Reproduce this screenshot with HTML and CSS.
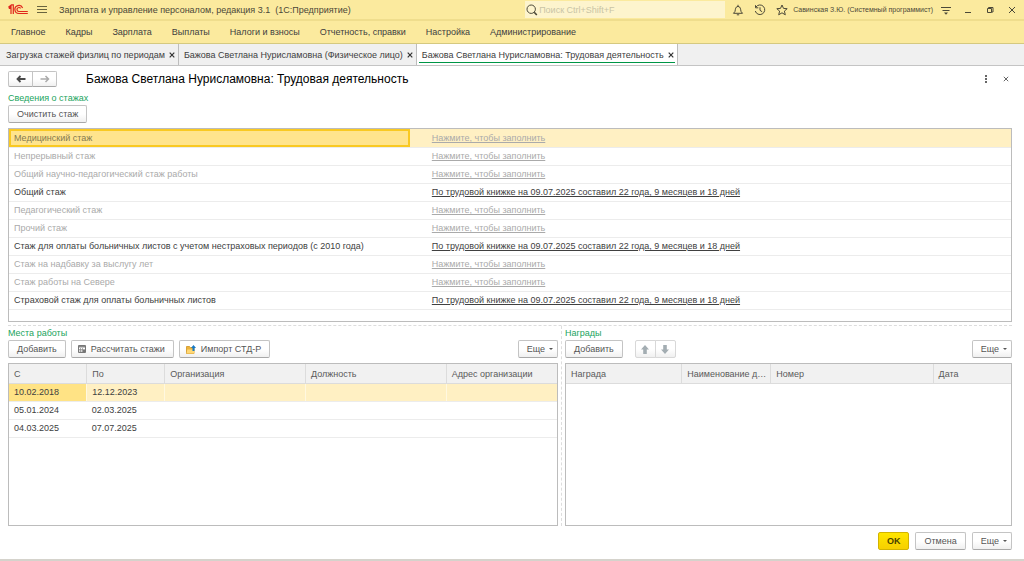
FILE: index.html
```html
<!DOCTYPE html>
<html lang="ru">
<head>
<meta charset="utf-8">
<title>Бажова Светлана Нурисламовна: Трудовая деятельность</title>
<link rel="stylesheet" href="styles.css">
</head>
<body>
<div class="app">
  <header class="titlebar">
    <svg class="logo" viewBox="0 0 20 11" width="20" height="11" role="img" aria-label="1С">
      <g fill="none" stroke="#e0261c" stroke-width="1.200">
        <path d="M.5 3.500 3 1.700V10M5.300 10V.9H3.500L.4 3.200M.8 4.500 3 3"/>
        <path d="M14.600 4A4 4 0 1 0 10.900 9.500H19.800"/>
        <path d="M12.600 4.300A2 2 0 1 0 10.900 7.500H19.800"/>
      </g>
    </svg>
    <button class="icon-btn burger" aria-label="Меню">
      <svg viewBox="0 0 10 9" width="10" height="9" stroke="#69643f" stroke-width="1"><path d="M0 1.500H10M0 4.500H10M0 7.500H10"/></svg>
    </button>
    <span class="app-name">Зарплата и управление персоналом, редакция 3.1&nbsp; (1С:Предприятие)</span>
    <label class="search">
      <svg viewBox="0 0 12 12" width="12" height="12" fill="none" stroke="#4b4838"><circle cx="5.200" cy="5.200" r="4.200"/><path d="M8.200 8.200 10.800 11" stroke-width="1.600"/></svg>
      <input type="search" placeholder="Поиск Ctrl+Shift+F" aria-label="Поиск">
    </label>
    <div class="tools">
      <button class="icon-btn" aria-label="Уведомления"><svg viewBox="0 0 12 12" width="12" height="12" fill="none" stroke="#4b4838"><path d="M1.500 9.300H10.500L9 7.400C8.600 5.400 8.500 2.400 6 2.400S3.400 5.400 3 7.400ZM6 .8V2.400M4.800 10.800H7.200"/></svg></button>
      <button class="icon-btn" aria-label="История"><svg viewBox="0 0 12 12" width="12" height="12" fill="none" stroke="#4b4838"><path d="M2 3A4.800 4.800 0 1 1 1.300 7M1.500 1.200V3.800H4.300M6 3.300V6.300L8.200 7.800"/></svg></button>
      <button class="icon-btn" aria-label="Избранное"><svg viewBox="0 0 12 12" width="12" height="12" fill="none" stroke="#4b4838"><path d="M6 1 7.500 4.400 11.200 4.700 8.400 7.100 9.300 10.800 6 8.800 2.700 10.800 3.600 7.100.8 4.700 4.500 4.400Z"/></svg></button>
    </div>
    <span class="user">Савинская З.Ю. (Системный программист)</span>
    <div class="window-tools">
      <button class="icon-btn" aria-label="Настройка панели"><svg viewBox="0 0 12 12" width="12" height="12" fill="none" stroke="#4b4838"><path d="M1 3.500H11M2.500 6.500H9.500"/><path d="M4 8.500H8L6 10.800Z" fill="#4b4838" stroke="none"/></svg></button>
      <button class="icon-btn" aria-label="Свернуть"><svg viewBox="0 0 12 12" width="12" height="12" fill="none" stroke="#4b4838"><path d="M3 8.500H9"/></svg></button>
      <button class="icon-btn" aria-label="Развернуть"><svg viewBox="0 0 12 12" width="12" height="12" fill="none" stroke="#4b4838"><path d="M3.500 4.500H7.500V8.500H3.500ZM4.500 4.500V3.500H9V8H7.500"/></svg></button>
      <button class="icon-btn" aria-label="Закрыть"><svg viewBox="0 0 12 12" width="12" height="12" fill="none" stroke="#4b4838"><path d="M3 3 9 9M9 3 3 9"/></svg></button>
    </div>
  </header>

  <nav class="menu">
    <a href="#">Главное</a><a href="#">Кадры</a><a href="#">Зарплата</a><a href="#">Выплаты</a><a href="#">Налоги и взносы</a><a href="#">Отчетность, справки</a><a href="#">Настройка</a><a href="#">Администрирование</a>
  </nav>

  <div class="tabs">
    <div class="tab"><a href="#">Загрузка стажей физлиц по периодам</a><button class="tab-close" aria-label="Закрыть вкладку"><svg viewBox="0 0 6 6" width="6" height="6"><path d="M.7.7 5.300 5.300M5.300.7.7 5.300"/></svg></button></div>
    <div class="tab"><a href="#">Бажова Светлана Нурисламовна (Физическое лицо)</a><button class="tab-close" aria-label="Закрыть вкладку"><svg viewBox="0 0 6 6" width="6" height="6"><path d="M.7.7 5.300 5.300M5.300.7.7 5.300"/></svg></button></div>
    <div class="tab active"><a href="#">Бажова Светлана Нурисламовна: Трудовая деятельность</a><button class="tab-close" aria-label="Закрыть вкладку"><svg viewBox="0 0 6 6" width="6" height="6"><path d="M.7.7 5.300 5.300M5.300.7.7 5.300"/></svg></button></div>
  </div>

  <main class="form">
    <div class="form-head">
      <div class="btn-pair">
        <button class="btn" aria-label="Назад"><svg viewBox="0 0 10 8" width="10" height="8" fill="none" stroke="#4a4a4a" stroke-width="1.800"><path d="M9.500 4H2M4.500 1 1.500 4 4.500 7"/></svg></button>
        <button class="btn" aria-label="Вперед"><svg viewBox="0 0 10 8" width="10" height="8" fill="none" stroke="#aaa" stroke-width="1.500"><path d="M.5 4H8M5.500 1 8.500 4 5.500 7"/></svg></button>
      </div>
      <h1>Бажова Светлана Нурисламовна: Трудовая деятельность</h1>
      <div class="form-tools">
        <button class="icon-btn" aria-label="Еще действия"><svg viewBox="0 0 8 10" width="8" height="10" fill="#666"><path d="M3 1H5V3H3ZM3 4H5V6H3ZM3 7H5V9H3Z"/></svg></button>
        <button class="icon-btn" aria-label="Закрыть форму"><svg viewBox="0 0 8 8" width="8" height="8" stroke="#666"><path d="M1.800 1.800 6.200 6.200M6.200 1.800 1.800 6.200"/></svg></button>
      </div>
    </div>

    <section class="experience">
      <h2>Сведения о стажах</h2>
      <div class="bar"><button class="btn">Очистить стаж</button></div>
      <div class="grid-box">
        <table class="grid exp-grid">
          <colgroup><col class="c-kind"><col></colgroup>
          <tbody>
            <tr class="selected empty"><td class="current">Медицинский стаж</td><td><a href="#">Нажмите, чтобы заполнить</a></td></tr>
            <tr class="empty"><td>Непрерывный стаж</td><td><a href="#">Нажмите, чтобы заполнить</a></td></tr>
            <tr class="empty"><td>Общий научно-педагогический стаж работы</td><td><a href="#">Нажмите, чтобы заполнить</a></td></tr>
            <tr><td>Общий стаж</td><td><a href="#">По трудовой книжке на 09.07.2025 составил 22 года, 9 месяцев и 18 дней</a></td></tr>
            <tr class="empty"><td>Педагогический стаж</td><td><a href="#">Нажмите, чтобы заполнить</a></td></tr>
            <tr class="empty"><td>Прочий стаж</td><td><a href="#">Нажмите, чтобы заполнить</a></td></tr>
            <tr><td>Стаж для оплаты больничных листов с учетом нестраховых периодов (с 2010 года)</td><td><a href="#">По трудовой книжке на 09.07.2025 составил 22 года, 9 месяцев и 18 дней</a></td></tr>
            <tr class="empty"><td>Стаж на надбавку за выслугу лет</td><td><a href="#">Нажмите, чтобы заполнить</a></td></tr>
            <tr class="empty"><td>Стаж работы на Севере</td><td><a href="#">Нажмите, чтобы заполнить</a></td></tr>
            <tr><td>Страховой стаж для оплаты больничных листов</td><td><a href="#">По трудовой книжке на 09.07.2025 составил 22 года, 9 месяцев и 18 дней</a></td></tr>
          </tbody>
        </table>
      </div>
    </section>

    <div class="lower">
      <section class="jobs">
        <h2>Места работы</h2>
        <div class="bar">
          <button class="btn">Добавить</button>
          <button class="btn with-icon"><svg viewBox="0 0 8 8" width="8" height="8"><path d="M.5.5H7.500V7.500H.5Z" fill="#fff" stroke="#777"/><path d="M1 1H7V2.500H1Z" fill="#888"/><path d="M2.500 3V7M4.500 3V7M1 4.500H7M1 6H5" stroke="#888" stroke-width=".7"/><path d="M5 5H7V7H5Z" fill="#777"/></svg>Рассчитать стажи</button>
          <button class="btn with-icon"><svg viewBox="0 0 10 9" width="10" height="9"><path d="M.5 8.500V1.500H3.500L4.500 2.500H8V8.500Z" fill="#edb43c" stroke="#cf9320" stroke-width=".8"/><path d="M.5 8.500 1.300 4.500H9L8 8.500Z" fill="#ffd875"/><path d="M7.500 0 10 3H8.500V6H6.500V3H5Z" fill="#1879c4"/></svg>Импорт СТД-Р</button>
          <button class="btn drop more">Еще<span class="caret"></span></button>
        </div>
        <div class="grid-box">
          <table class="grid jobs-grid">
            <colgroup><col class="c-from"><col class="c-to"><col class="c-org"><col class="c-post"><col></colgroup>
            <thead><tr><th>С</th><th>По</th><th>Организация</th><th>Должность</th><th>Адрес организации</th></tr></thead>
            <tbody>
              <tr class="selected"><td class="picked">10.02.2018</td><td>12.12.2023</td><td></td><td></td><td></td></tr>
              <tr><td>05.01.2024</td><td>02.03.2025</td><td></td><td></td><td></td></tr>
              <tr><td>04.03.2025</td><td>07.07.2025</td><td></td><td></td><td></td></tr>
            </tbody>
          </table>
        </div>
      </section>

      <section class="awards">
        <h2>Награды</h2>
        <div class="bar">
          <button class="btn">Добавить</button>
          <div class="btn-pair order">
            <button class="btn" aria-label="Вверх"><svg viewBox="0 0 8 9" width="8" height="9" fill="#a3adb2"><path d="M4 0 8 4.500H5.800V9H2.200V4.500H0Z"/></svg></button>
            <button class="btn" aria-label="Вниз"><svg viewBox="0 0 8 9" width="8" height="9" fill="#a3adb2"><path d="M4 9 8 4.500H5.800V0H2.200V4.500H0Z"/></svg></button>
          </div>
          <button class="btn drop more">Еще<span class="caret"></span></button>
        </div>
        <div class="grid-box">
          <table class="grid awards-grid">
            <colgroup><col class="c-award"><col class="c-name"><col class="c-num"><col></colgroup>
            <thead><tr><th>Награда</th><th>Наименование д…</th><th>Номер</th><th>Дата</th></tr></thead>
          </table>
        </div>
      </section>
    </div>

    <footer class="form-foot">
      <button class="btn primary">OK</button>
      <button class="btn">Отмена</button>
      <button class="btn drop">Еще<span class="caret"></span></button>
    </footer>
  </main>
</div>
</body>
</html>
```

FILE: styles.css
```css
* { box-sizing: border-box; }

body {
  margin: 0;
  font: 9px/12px "Liberation Sans", Arial, sans-serif;
  color: #404040;
  background: #fff;
}

button, input { font: inherit; color: inherit; }
a { color: inherit; text-decoration: none; }
h1, h2 { margin: 0; font-weight: normal; }
svg { display: block; flex: none; }

.app {
  display: flex;
  flex-direction: column;
  min-height: 100vh;
  border-bottom: 2px solid #d5d3cc;
}

/* Title bar */
.titlebar {
  display: flex;
  align-items: center;
  height: 21px;
  padding: 0 6px 0 8px;
  background: #fbea9e;
  border-bottom: 2px solid #efdd8d;
  color: #4b4838;
}
.icon-btn {
  display: flex;
  align-items: center;
  justify-content: center;
  padding: 0;
  border: 0;
  background: none;
}
.burger { margin: 0 12px 0 9px; }
.app-name { flex: 1; white-space: nowrap; }
.search {
  display: flex;
  align-items: center;
  gap: 1px;
  width: 200px;
  height: 17px;
  padding-left: 1px;
  background: #fdf4cd;
}
.search input {
  flex: 1;
  min-width: 0;
  padding: 0;
  border: 0;
  outline: 0;
  background: none;
}
.search input::placeholder { color: #c9c4a6; opacity: 1; }
.tools { display: flex; gap: 10px; margin: 0 5px 0 7px; }
.user { font-size: 7px; white-space: nowrap; }
.window-tools { display: flex; gap: 10px; margin-left: 7px; }

/* Sections menu */
.menu {
  display: flex;
  align-items: center;
  gap: 20px;
  height: 23px;
  padding: 0 11px;
  background: #fbea9e;
  border-bottom: 1px solid #d5c980;
  white-space: nowrap;
}

/* Open forms */
.tabs {
  display: flex;
  height: 22px;
  background: #f0f0f0;
  border-bottom: 1px solid #c4c4c4;
  white-space: nowrap;
}
.tab {
  display: flex;
  align-items: center;
  gap: 3px;
  padding: 0 2px 0 5px;
  border-right: 1px solid #bdbdbd;
}
.tab:first-child { padding-left: 6px; }
.tab.active {
  background: linear-gradient(#009646, #009646) 50% 18px / calc(100% - 4px) 1px no-repeat #fff;
}
.tab-close { padding: 1px; border: 0; background: none; }
.tab-close path { stroke: #333; stroke-width: 1.2; }

/* Form */
.form {
  flex: 1;
  display: flex;
  flex-direction: column;
  padding: 5px 12px 9px 8px;
}
.form-head { display: flex; align-items: center; height: 16px; }
.form-head h1 {
  flex: 1;
  margin-left: 29px;
  font-size: 12px;
  line-height: 16px;
  color: #000;
}
.form-head .btn { width: 25px; height: 16px; }
.form-tools { display: flex; align-items: center; gap: 12px; margin-right: 2px; }

.btn {
  display: flex;
  align-items: center;
  justify-content: center;
  height: 18px;
  padding: 0 8px;
  border: 1px solid #c4c4c4;
  border-bottom-color: #a8a8a8;
  border-radius: 2px;
  background: linear-gradient(#fff 50%, #f0f0f0);
  color: #555;
  white-space: nowrap;
}
.btn.with-icon { gap: 5px; padding: 0 8px 0 6px; }
.btn.drop { padding-right: 4px; }
.btn-pair { display: flex; }
.btn-pair .btn { padding: 0; }
.btn-pair .btn:first-child { border-radius: 2px 0 0 2px; }
.btn-pair .btn:last-child { margin-left: -1px; border-radius: 0 2px 2px 0; }
.order { margin-left: 7px; }
.order .btn { width: 21px; border-color: #d8d8d8; }
.caret {
  margin-left: 4px;
  border: 2px solid transparent;
  border-top-color: #555;
  border-bottom: 0;
}
.btn.more { margin-left: auto; }

h2 { font-size: 9px; line-height: 12px; color: #22a45d; }
.bar { display: flex; gap: 5px; margin: 1px 0 5px; }

.experience {
  flex: 231 1 0;
  display: flex;
  flex-direction: column;
  padding-top: 5px;
}
.lower {
  flex: 200 1 0;
  display: grid;
  grid-template-columns: 554fr 450fr;
  margin-top: 3px;
  border-top: 1px dashed #ddd;
}
.jobs, .awards { display: flex; flex-direction: column; padding-top: 1px; }
.jobs { padding-right: 3px; border-right: 1px dashed #ddd; }
.awards { padding-left: 3px; }

.grid-box {
  flex: 1;
  overflow: hidden;
  border: 1px solid #bcbcbc;
}
.grid { width: 100%; border-collapse: collapse; table-layout: fixed; }
.grid th, .grid td {
  height: 18px;
  padding: 0 2px 0 5px;
  border-bottom: 1px solid #ececec;
  text-align: left;
  font-weight: normal;
  white-space: nowrap;
  overflow: hidden;
  text-overflow: ellipsis;
}
.grid th {
  height: 19px;
  background: #f1f1f1;
  color: #5a5a5a;
  border-bottom-color: #dcdcdc;
}
.grid th + th { border-left: 1px solid #dcdcdc; }
.selected td { background: #fff0c3; }
.selected td + td { border-left: 1px solid #fff8e0; }
.selected .picked { background: #ffe385; }
.selected .current { background: #ffe48d; box-shadow: inset 0 0 0 2px #f9c922; }
.exp-grid td + td, .exp-grid .selected td + td { padding-left: 22px; border-left: 0; }
.exp-grid a { text-decoration: underline; text-underline-offset: 1px; }
.empty { color: #aaa; }
.empty .current { color: #857a50; }

.c-kind { width: 40%; }
.c-from, .c-to { width: 14.2%; }
.c-org, .c-post { width: 25.7%; }
.c-award { width: 26%; }
.c-name { width: 20%; }
.c-num { width: 36.5%; }

.form-foot {
  display: flex;
  justify-content: flex-end;
  gap: 6px;
  margin-top: 6px;
}
.btn.primary {
  border-color: #d3b400;
  background: linear-gradient(#ffe600, #f7d000);
  color: #4a4100;
  font-weight: bold;
}
```
